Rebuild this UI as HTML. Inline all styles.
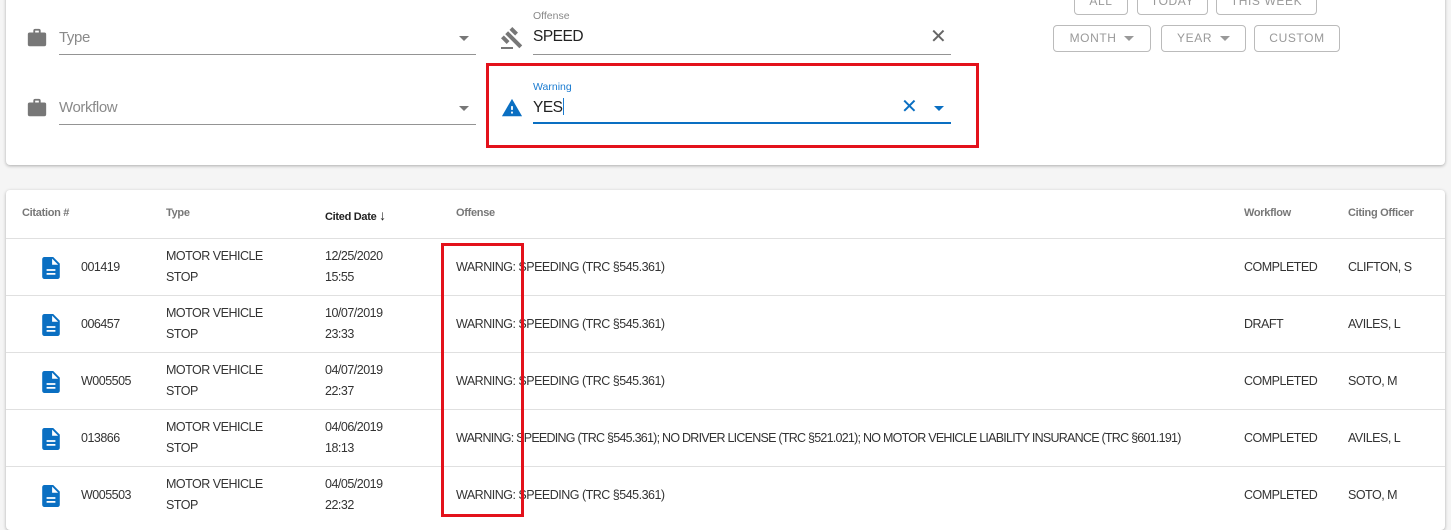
<!DOCTYPE html>
<html><head><meta charset="utf-8"><style>
*{margin:0;padding:0;box-sizing:border-box}
body{width:1451px;height:518px;overflow:hidden;background:#f5f5f5;font-family:"Liberation Sans",sans-serif;color:#333;position:relative}
.a{position:absolute}
.card{position:absolute;background:#fff;border-radius:4px;box-shadow:0 1px 3px rgba(0,0,0,.3)}
.line{position:absolute;height:1px;background:#949494}
.lbl{font-size:15px;color:#8a8a8a;letter-spacing:-0.4px}
.btn{position:absolute;border:1px solid #bbb;border-radius:4px;font-size:12px;color:#999;letter-spacing:0.6px;text-align:center;height:27px;line-height:25px}
.tri{display:inline-block;width:0;height:0;border-left:5px solid transparent;border-right:5px solid transparent;border-top:5px solid #777;vertical-align:middle}
.th{position:absolute;top:207px;font-size:11px;font-weight:bold;color:#777;letter-spacing:-0.3px}
.row{position:absolute;left:6px;width:1439px;height:57px;border-top:1px solid #e0e0e0;font-size:12.5px;color:#333;letter-spacing:-0.5px}
.row .a{line-height:21px}
.red{position:absolute;border:3px solid #e3111b}
</style></head><body>
<div class="card" style="left:6px;top:-10px;width:1439px;height:175px"></div>
<svg class="a" style="left:26px;top:27px" width="22" height="22" viewBox="0 0 24 24"><path fill="#777" d="M10 2h4a2 2 0 0 1 2 2v2h4a2 2 0 0 1 2 2v11a2 2 0 0 1-2 2H4a2 2 0 0 1-2-2V8a2 2 0 0 1 2-2h4V4a2 2 0 0 1 2-2m4 4V4h-4v2h4z"/></svg>
<svg class="a" style="left:26px;top:97px" width="22" height="22" viewBox="0 0 24 24"><path fill="#777" d="M10 2h4a2 2 0 0 1 2 2v2h4a2 2 0 0 1 2 2v11a2 2 0 0 1-2 2H4a2 2 0 0 1-2-2V8a2 2 0 0 1 2-2h4V4a2 2 0 0 1 2-2m4 4V4h-4v2h4z"/></svg>
<div class="a lbl" style="left:59px;top:29px">Type</div>
<div class="a" style="left:459px;top:30px"><span class="tri"></span></div>
<div class="line" style="left:59px;top:54px;width:417px"></div>
<div class="a lbl" style="left:59px;top:99px">Workflow</div>
<div class="a" style="left:459px;top:100px"><span class="tri"></span></div>
<div class="line" style="left:59px;top:124px;width:417px"></div>
<svg class="a" style="left:499px;top:26px" width="26" height="24" viewBox="0 0 24 24"><path fill="#777" d="M1 21h12v2H1v-2M5.24 8.07l2.83-2.83 14.14 14.14-2.83 2.83L5.24 8.07M12.32 1l5.66 5.66-2.83 2.83-5.66-5.66L12.32 1M3.83 9.48l5.66 5.66-2.83 2.83L1 12.31l2.83-2.83z"/></svg>
<div class="a" style="left:533px;top:10px;font-size:10.5px;color:#888">Offense</div>
<div class="a" style="left:533px;top:28px;font-size:15.5px;color:#222;letter-spacing:-0.5px">SPEED</div>
<div class="a" style="left:930px;top:26px;font-size:20px;color:#666;line-height:22px">✕</div>
<div class="line" style="left:533px;top:54px;width:418px"></div>
<svg class="a" style="left:500px;top:97px" width="24" height="22" viewBox="0 0 24 24"><path fill="#0a6fc2" d="M1 21h22L12 2 1 21zm12-3h-2v-2h2v2zm0-4h-2v-4h2v4z"/></svg>
<div class="a" style="left:533px;top:81px;font-size:10.5px;color:#1a7bd0">Warning</div>
<div class="a" style="left:533px;top:98px;font-size:15.5px;color:#222;letter-spacing:-0.5px">YES<span style="display:inline-block;width:1px;height:17px;background:#1a7bd0;vertical-align:-3px"></span></div>
<div class="a" style="left:901px;top:96px;font-size:20px;color:#0a6fc2;line-height:22px">✕</div>
<div class="a" style="left:934px;top:100px"><span class="tri" style="border-top-color:#0a6fc2"></span></div>
<div class="a" style="left:533px;top:122px;width:418px;height:2px;background:#0a6fc2"></div>
<div class="red" style="left:486px;top:63px;width:493px;height:85px"></div>
<div class="btn" style="left:1074px;top:-12px;width:54px">ALL</div>
<div class="btn" style="left:1137px;top:-12px;width:71px">TODAY</div>
<div class="btn" style="left:1216px;top:-12px;width:101px">THIS WEEK</div>
<div class="btn" style="left:1053px;top:25px;width:98px">MONTH&nbsp; <span class="tri" style="border-top-color:#999"></span></div>
<div class="btn" style="left:1161px;top:25px;width:85px">YEAR&nbsp; <span class="tri" style="border-top-color:#999"></span></div>
<div class="btn" style="left:1254px;top:25px;width:86px">CUSTOM</div>
<div class="card" style="left:6px;top:190px;width:1439px;height:340px"></div>
<div class="th" style="left:22px">Citation #</div>
<div class="th" style="left:166px">Type</div>
<div class="th" style="left:325px;color:#222">Cited Date <span style="font-weight:normal;font-size:14px">↓</span></div>
<div class="th" style="left:456px">Offense</div>
<div class="th" style="left:1244px">Workflow</div>
<div class="th" style="left:1348px">Citing Officer</div>

<div class="row" style="top:238px">
<svg class="a" style="left:36px;top:18px" width="18" height="22" viewBox="0 0 16 20"><path fill="#0a6fc2" d="M2 0h8l6 6v12a2 2 0 0 1-2 2H2a2 2 0 0 1-2-2V2a2 2 0 0 1 2-2zm7 1.5V7h5.5zM4 11v1.6h8V11zm0 3.5v1.6h8v-1.6z"/></svg>
<div class="a" style="left:75px;top:18px">001419</div><div class="a" style="left:160px;top:7px">MOTOR VEHICLE<br>STOP</div><div class="a" style="left:319px;top:7px">12/25/2020<br>15:55</div><div class="a" style="left:450px;top:18px">WARNING: SPEEDING (TRC §545.361)</div><div class="a" style="left:1238px;top:18px">COMPLETED</div><div class="a" style="left:1342px;top:18px">CLIFTON, S</div></div>
<div class="row" style="top:295px">
<svg class="a" style="left:36px;top:18px" width="18" height="22" viewBox="0 0 16 20"><path fill="#0a6fc2" d="M2 0h8l6 6v12a2 2 0 0 1-2 2H2a2 2 0 0 1-2-2V2a2 2 0 0 1 2-2zm7 1.5V7h5.5zM4 11v1.6h8V11zm0 3.5v1.6h8v-1.6z"/></svg>
<div class="a" style="left:75px;top:18px">006457</div><div class="a" style="left:160px;top:7px">MOTOR VEHICLE<br>STOP</div><div class="a" style="left:319px;top:7px">10/07/2019<br>23:33</div><div class="a" style="left:450px;top:18px">WARNING: SPEEDING (TRC §545.361)</div><div class="a" style="left:1238px;top:18px">DRAFT</div><div class="a" style="left:1342px;top:18px">AVILES, L</div></div>
<div class="row" style="top:352px">
<svg class="a" style="left:36px;top:18px" width="18" height="22" viewBox="0 0 16 20"><path fill="#0a6fc2" d="M2 0h8l6 6v12a2 2 0 0 1-2 2H2a2 2 0 0 1-2-2V2a2 2 0 0 1 2-2zm7 1.5V7h5.5zM4 11v1.6h8V11zm0 3.5v1.6h8v-1.6z"/></svg>
<div class="a" style="left:75px;top:18px">W005505</div><div class="a" style="left:160px;top:7px">MOTOR VEHICLE<br>STOP</div><div class="a" style="left:319px;top:7px">04/07/2019<br>22:37</div><div class="a" style="left:450px;top:18px">WARNING: SPEEDING (TRC §545.361)</div><div class="a" style="left:1238px;top:18px">COMPLETED</div><div class="a" style="left:1342px;top:18px">SOTO, M</div></div>
<div class="row" style="top:409px">
<svg class="a" style="left:36px;top:18px" width="18" height="22" viewBox="0 0 16 20"><path fill="#0a6fc2" d="M2 0h8l6 6v12a2 2 0 0 1-2 2H2a2 2 0 0 1-2-2V2a2 2 0 0 1 2-2zm7 1.5V7h5.5zM4 11v1.6h8V11zm0 3.5v1.6h8v-1.6z"/></svg>
<div class="a" style="left:75px;top:18px">013866</div><div class="a" style="left:160px;top:7px">MOTOR VEHICLE<br>STOP</div><div class="a" style="left:319px;top:7px">04/06/2019<br>18:13</div><div class="a" style="left:450px;top:18px;white-space:nowrap;letter-spacing:-0.75px">WARNING: SPEEDING (TRC §545.361); NO DRIVER LICENSE (TRC §521.021); NO MOTOR VEHICLE LIABILITY INSURANCE (TRC §601.191)</div><div class="a" style="left:1238px;top:18px">COMPLETED</div><div class="a" style="left:1342px;top:18px">AVILES, L</div></div>
<div class="row" style="top:466px">
<svg class="a" style="left:36px;top:18px" width="18" height="22" viewBox="0 0 16 20"><path fill="#0a6fc2" d="M2 0h8l6 6v12a2 2 0 0 1-2 2H2a2 2 0 0 1-2-2V2a2 2 0 0 1 2-2zm7 1.5V7h5.5zM4 11v1.6h8V11zm0 3.5v1.6h8v-1.6z"/></svg>
<div class="a" style="left:75px;top:18px">W005503</div><div class="a" style="left:160px;top:7px">MOTOR VEHICLE<br>STOP</div><div class="a" style="left:319px;top:7px">04/05/2019<br>22:32</div><div class="a" style="left:450px;top:18px">WARNING: SPEEDING (TRC §545.361)</div><div class="a" style="left:1238px;top:18px">COMPLETED</div><div class="a" style="left:1342px;top:18px">SOTO, M</div></div>
<div class="red" style="left:441px;top:243px;width:83px;height:274px"></div>
</body></html>
